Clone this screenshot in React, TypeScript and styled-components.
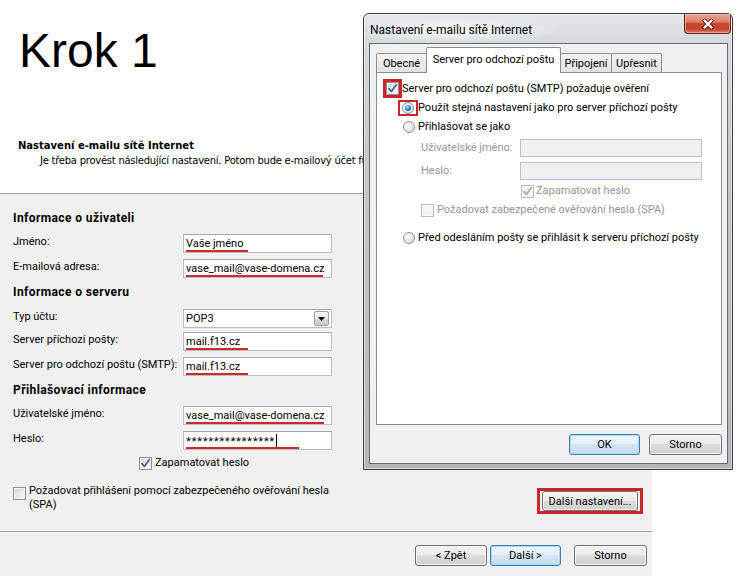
import React from 'react';
import styled, { createGlobalStyle, css } from 'styled-components';

const UI = `Roboto, "Liberation Sans", Arial, sans-serif`;
const TAHOMA = `"DejaVu Sans", Verdana, sans-serif`;
const RED = '#c8262c';

const Global = createGlobalStyle`
  html, body { margin: 0; padding: 0; background: #fff; }
  body { width: 753px; height: 576px; overflow: hidden; font-family: ${UI}; font-size: 11px; color: #000; }
  * { box-sizing: border-box; }
`;

const Page = styled.div`
  position: relative;
  width: 753px;
  height: 576px;
  background: #fff;
  overflow: hidden;
`;

const Wizard = styled.div`
  display: flex;
  flex-direction: column;
  width: 753px;
  height: 576px;
`;

const Header = styled.header`
  height: 193px;
  flex-shrink: 0;
  display: flex;
  flex-direction: column;
  background: #fff;
`;

const StepTitle = styled.h1`
  margin: 27px 0 0 19px;
  font: 400 48px/48px "Liberation Sans", Arial, sans-serif;
  color: #000;
`;

const HeaderTitle = styled.div`
  margin: 64px 0 0 18px;
  font: 700 10px/14px ${TAHOMA};
  color: #000;
`;

const HeaderSub = styled.div`
  margin: 1px 0 0 40px;
  font: 400 10px/14px ${TAHOMA};
  letter-spacing: -0.25px;
  white-space: nowrap;
  color: #000;
`;

const Body = styled.section`
  width: 652px;
  flex: 1;
  background: #f0f0f0;
  border-top: 1px solid #a0a0a0;
  display: flex;
  flex-direction: column;
`;

const Form = styled.div`
  height: 337px;
  flex-shrink: 0;
  padding: 16px 0 0 13px;
  display: flex;
  flex-direction: column;
`;

const SectionTitle = styled.div<{ $mt: number }>`
  margin-top: ${p => p.$mt}px;
  height: 16px;
  line-height: 16px;
  font-weight: 700;
  font-size: 12px;
  letter-spacing: 0.4px;
`;

const FieldRow = styled.div<{ $mt: number }>`
  margin-top: ${p => p.$mt}px;
  display: flex;
  align-items: center;
  height: 19px;
`;

const FieldLabel = styled.label`
  width: 170px;
  flex-shrink: 0;
  line-height: 14px;
  margin-top: -3px;
`;

const TextBox = styled.div`
  position: relative;
  width: 149px;
  height: 19px;
  background: #fff;
  border: 1px solid #b9bcc3;
  border-top-color: #a3a6ad;
  padding: 0 2px;
  display: flex;
  align-items: center;
  font-size: 11px;
  white-space: nowrap;
  overflow: hidden;
`;

const Masked = styled.span`
  letter-spacing: 0.6px;
  font-size: 11.5px;
`;

const RedMark = styled.span<{ $w: number }>`
  position: absolute;
  left: 2px;
  bottom: 0;
  height: 2px;
  width: ${p => p.$w}px;
  background: #cf2a2a;
`;

const Caret = styled.span`
  display: inline-block;
  width: 1px;
  height: 13px;
  background: #000;
  margin-left: 1px;
`;

const DropButton = styled.span`
  margin-left: auto;
  width: 15px;
  height: 15px;
  border: 1px solid #9a9ea5;
  border-radius: 2px;
  background: linear-gradient(#f6f6f6 0%, #e6e6e6 50%, #d6d6d6 51%, #cbcbcb 100%);
  display: flex;
  align-items: center;
  justify-content: center;
`;

const CheckRow = styled.label<{ $mt: number; $ml: number; $gap?: number }>`
  margin-top: ${p => p.$mt}px;
  margin-left: ${p => p.$ml}px;
  display: flex;
  align-items: center;
  gap: ${p => p.$gap ?? 3}px;
  line-height: 14px;
  height: 14px;
  white-space: nowrap;
`;

const OptionsRow = styled.div`
  margin-top: 14px;
  display: flex;
  justify-content: space-between;
  align-items: flex-start;
  padding-right: 9px;
`;

const SpaCheck = styled.label`
  display: flex;
  align-items: flex-start;
  gap: 3px;
  line-height: 14px;
  & > span:first-child {
    margin-top: 3px;
  }
`;

const Annot = styled.span<{ $pad?: string; $bw?: number; $mt?: number }>`
  display: inline-flex;
  align-items: center;
  justify-content: center;
  flex-shrink: 0;
  border: ${p => p.$bw ?? 3}px solid ${RED};
  padding: ${p => p.$pad ?? '0'};
  margin-top: ${p => p.$mt ?? 0}px;
`;

const ButtonBar = styled.div`
  flex: 1;
  border-top: 1px solid #a0a0a0;
  display: flex;
  justify-content: flex-end;
  align-items: flex-start;
  padding: 13px 5px 0 0;
`;

const WinButton = styled.button<{ $w: number; $h?: number; $default?: boolean; $ml?: number }>`
  width: ${p => p.$w}px;
  height: ${p => p.$h ?? 21}px;
  margin-left: ${p => p.$ml ?? 0}px;
  padding: 0;
  font: 400 11px/1 ${UI};
  color: #000;
  border: 1px solid ${p => (p.$default ? '#3c7fb1' : '#707070')};
  border-radius: 3px;
  background: ${p =>
    p.$default
      ? 'linear-gradient(#f1f7fc 0%, #e3eef8 49%, #d3e5f4 50%, #c6ddf1 100%)'
      : 'linear-gradient(#f2f2f2 0%, #ebebeb 49%, #dddddd 50%, #cfcfcf 100%)'};
  box-shadow: inset 0 0 0 1px ${p => (p.$default ? '#a6dbf7' : 'rgba(255,255,255,0.75)')};
`;

/* ---------- checkbox / radio ---------- */

const BoxShell = styled.span<{ $disabled?: boolean }>`
  width: 13px;
  height: 13px;
  flex-shrink: 0;
  border: 1px solid ${p => (p.$disabled ? '#bdbdbd' : '#8e8f8f')};
  background: ${p =>
    p.$disabled
      ? '#f4f4f4'
      : 'linear-gradient(135deg, #cdd1d6 0%, #e9ebee 55%, #fafafa 100%)'};
  box-shadow: inset 0 0 0 1px ${p => (p.$disabled ? '#f8f8f8' : '#f4f4f4')};
  display: inline-flex;
  align-items: center;
  justify-content: center;
`;

const Radio = styled.span<{ $on?: boolean }>`
  width: 12px;
  height: 12px;
  border-radius: 50%;
  flex-shrink: 0;
  border: 1px solid #8e8f8f;
  background: radial-gradient(circle at 35% 35%, #fdfdfd 0%, #e6e6e6 55%, #cdcdcd 100%);
  display: inline-flex;
  align-items: center;
  justify-content: center;
  ${p =>
    p.$on &&
    css`
      &::after {
        content: '';
        width: 6px;
        height: 6px;
        border-radius: 50%;
        background: radial-gradient(circle at 40% 35%, #c4ecff 0%, #2f86d8 45%, #0b3775 100%);
      }
    `}
`;

function Check({ checked, disabled }: { checked?: boolean; disabled?: boolean }) {
  return (
    <BoxShell $disabled={disabled}>
      {checked && (
        <svg width="11" height="11" viewBox="0 0 11 11">
          <path
            d="M2 5.6 L4.4 8.4 L9.2 1.8"
            fill="none"
            stroke={disabled ? '#a6a6a6' : '#4a5e99'}
            strokeWidth="1.7"
            strokeLinecap="round"
            strokeLinejoin="round"
          />
        </svg>
      )}
    </BoxShell>
  );
}

/* ---------- dialog ---------- */

const Dialog = styled.div`
  position: absolute;
  left: 363px;
  top: 13px;
  width: 370px;
  height: 457px;
  border: 1px solid #3e4043;
  border-radius: 6px 6px 0 0;
  background: linear-gradient(180deg, #e4e7eb 0px, #d6dade 28px, #c4c8cd 140px, #b3b6ba 100%);
  box-shadow: inset 0 0 0 1px rgba(255, 255, 255, 0.45);
  display: flex;
  flex-direction: column;
  padding: 0 4px 5px 5px;
`;

const TitleBar = styled.div`
  height: 29px;
  flex-shrink: 0;
  display: flex;
  align-items: flex-start;
  background: radial-gradient(ellipse 110px 13px at 82px 16px, rgba(255, 255, 255, 0.9), rgba(255, 255, 255, 0));
`;

const Caption = styled.div`
  margin: 8px 0 0 1px;
  font: 400 12px/16px ${UI};
  color: #000;
  white-space: nowrap;
`;

const CloseButton = styled.span`
  margin-left: auto;
  margin-right: -3px;
  width: 47px;
  height: 20px;
  border: 1px solid #6b2418;
  border-top: none;
  border-radius: 0 0 4px 4px;
  background: linear-gradient(#e9a897 0%, #dc7e69 42%, #c7472f 50%, #c4442c 78%, #df7f65 100%);
  box-shadow: inset 0 0 0 1px rgba(255, 215, 200, 0.45);
  display: flex;
  align-items: center;
  justify-content: center;
`;

const Client = styled.div`
  flex: 1;
  background: #f0f0f0;
  border: 1px solid #676b71;
  padding: 3px 5px 0 6px;
  display: flex;
  flex-direction: column;
`;

const TabStrip = styled.div`
  height: 25px;
  display: flex;
  align-items: flex-end;
  flex-shrink: 0;
`;

const Tab = styled.div<{ $w: number; $active?: boolean }>`
  width: ${p => p.$w}px;
  height: ${p => (p.$active ? 26 : 19)}px;
  margin-bottom: ${p => (p.$active ? -1 : 0)}px;
  position: relative;
  z-index: ${p => (p.$active ? 1 : 0)};
  border: 1px solid #898c95;
  border-bottom: none;
  border-radius: 2px 2px 0 0;
  background: ${p => (p.$active ? '#fff' : 'linear-gradient(#f3f3f3, #e3e3e3)')};
  display: flex;
  align-items: ${p => (p.$active ? 'flex-start' : 'center')};
  padding-top: ${p => (p.$active ? 5 : 0)}px;
  justify-content: center;
  white-space: nowrap;
  & + & {
    margin-left: -1px;
  }
`;

const TabPanel = styled.div`
  height: 353px;
  flex-shrink: 0;
  background: #fff;
  border: 1px solid #898c95;
  padding: 6px 0 0 6px;
  display: flex;
  flex-direction: column;
`;

const PanelRow = styled.div<{ $mt: number; $ml: number; $h: number; $dim?: boolean }>`
  margin-top: ${p => p.$mt}px;
  margin-left: ${p => p.$ml}px;
  height: ${p => p.$h}px;
  display: flex;
  align-items: center;
  white-space: nowrap;
  line-height: 14px;
  color: ${p => (p.$dim ? '#969696' : '#000')};
`;

const Gap = styled.span<{ $w: number }>`
  display: inline-block;
  width: ${p => p.$w}px;
  flex-shrink: 0;
`;

const DimLabel = styled.span`
  width: 99px;
  flex-shrink: 0;
`;

const DimInput = styled.span`
  width: 182px;
  height: 18px;
  background: #f0f0f0;
  border: 1px solid #adc1da;
`;

const DialogButtons = styled.div`
  margin-top: 9px;
  display: flex;
  justify-content: flex-end;
  gap: 9px;
`;

export default function App() {
  return (
    <Page>
      <Global />
      <Wizard>
        <Header>
          <StepTitle>Krok 1</StepTitle>
          <HeaderTitle>Nastavení e-mailu sítě Internet</HeaderTitle>
          <HeaderSub>Je třeba provést následující nastavení. Potom bude e-mailový účet fungovat.</HeaderSub>
        </Header>
        <Body>
          <Form>
            <SectionTitle $mt={0}>Informace o uživateli</SectionTitle>
            <FieldRow $mt={8}>
              <FieldLabel>Jméno:</FieldLabel>
              <TextBox>
                Vaše jméno
                <RedMark $w={62} />
              </TextBox>
            </FieldRow>
            <FieldRow $mt={6}>
              <FieldLabel>E-mailová adresa:</FieldLabel>
              <TextBox>
                vase_mail@vase-domena.cz
                <RedMark $w={137} />
              </TextBox>
            </FieldRow>
            <SectionTitle $mt={6}>Informace o serveru</SectionTitle>
            <FieldRow $mt={9}>
              <FieldLabel>Typ účtu:</FieldLabel>
              <TextBox>
                POP3
                <DropButton>
                  <svg width="7" height="4" viewBox="0 0 7 4">
                    <path d="M0 0 H7 L3.5 4 Z" fill="#000" />
                  </svg>
                </DropButton>
              </TextBox>
            </FieldRow>
            <FieldRow $mt={4}>
              <FieldLabel>Server příchozí pošty:</FieldLabel>
              <TextBox>
                mail.f13.cz
                <RedMark $w={62} />
              </TextBox>
            </FieldRow>
            <FieldRow $mt={6}>
              <FieldLabel>Server pro odchozí poštu (SMTP):</FieldLabel>
              <TextBox>
                mail.f13.cz
                <RedMark $w={62} />
              </TextBox>
            </FieldRow>
            <SectionTitle $mt={6}>Přihlašovací informace</SectionTitle>
            <FieldRow $mt={8}>
              <FieldLabel>Uživatelské jméno:</FieldLabel>
              <TextBox>
                vase_mail@vase-domena.cz
                <RedMark $w={138} />
              </TextBox>
            </FieldRow>
            <FieldRow $mt={6}>
              <FieldLabel>Heslo:</FieldLabel>
              <TextBox>
                <Masked>****************</Masked>
                <Caret />
                <RedMark $w={113} />
              </TextBox>
            </FieldRow>
            <CheckRow $mt={6} $ml={126}>
              <Check checked />
              Zapamatovat heslo
            </CheckRow>
            <OptionsRow>
              <SpaCheck>
                <Check />
                <span>
                  Požadovat přihlášení pomocí zabezpečeného ověřování hesla
                  <br />
                  (SPA)
                </span>
              </SpaCheck>
              <Annot $pad="0 2px" $mt={4}>
                <WinButton $w={96} $h={20}>Další nastavení...</WinButton>
              </Annot>
            </OptionsRow>
          </Form>
          <ButtonBar>
            <WinButton $w={72}>&lt; Zpět</WinButton>
            <WinButton $w={71} $ml={3} $default>
              Další &gt;
            </WinButton>
            <WinButton $w={73} $ml={13}>
              Storno
            </WinButton>
          </ButtonBar>
        </Body>
      </Wizard>

      <Dialog>
        <TitleBar>
          <Caption>Nastavení e-mailu sítě Internet</Caption>
          <CloseButton>
            <svg width="14" height="12" viewBox="0 0 14 12">
              <path d="M3.5 2.5 L10.5 9.5 M10.5 2.5 L3.5 9.5" stroke="#5a1b10" strokeWidth="4" strokeLinecap="round" />
              <path d="M3.5 2.5 L10.5 9.5 M10.5 2.5 L3.5 9.5" stroke="#fff" strokeWidth="2.4" strokeLinecap="round" />
            </svg>
          </CloseButton>
        </TitleBar>
        <Client>
          <TabStrip>
            <Tab $w={51}>Obecné</Tab>
            <Tab $w={135} $active>
              Server pro odchozí poštu
            </Tab>
            <Tab $w={52}>Připojení</Tab>
            <Tab $w={51}>Upřesnit</Tab>
          </TabStrip>
          <TabPanel>
            <PanelRow $mt={0} $ml={0} $h={19}>
              <Annot>
                <Check checked />
              </Annot>
              Server pro odchozí poštu (SMTP) požaduje ověření
            </PanelRow>
            <PanelRow $mt={2} $ml={15} $h={16}>
              <Annot $bw={2} $pad="0 2px">
                <Radio $on />
              </Annot>
              Použít stejná nastavení jako pro server příchozí pošty
            </PanelRow>
            <PanelRow $mt={4} $ml={20} $h={14}>
              <Radio />
              <Gap $w={3} />
              Přihlašovat se jako
            </PanelRow>
            <PanelRow $mt={5} $ml={38} $h={18} $dim>
              <DimLabel>Uživatelské jméno:</DimLabel>
              <DimInput />
            </PanelRow>
            <PanelRow $mt={5} $ml={38} $h={18} $dim>
              <DimLabel>Heslo:</DimLabel>
              <DimInput />
            </PanelRow>
            <PanelRow $mt={4} $ml={138} $h={14} $dim>
              <Check checked disabled />
              <Gap $w={2} />
              Zapamatovat heslo
            </PanelRow>
            <PanelRow $mt={5} $ml={38} $h={14} $dim>
              <Check disabled />
              <Gap $w={3} />
              Požadovat zabezpečené ověřování hesla (SPA)
            </PanelRow>
            <PanelRow $mt={14} $ml={20} $h={14}>
              <Radio />
              <Gap $w={3} />
              Před odesláním pošty se přihlásit k serveru příchozí pošty
            </PanelRow>
          </TabPanel>
          <DialogButtons>
            <WinButton $w={71} $default>
              OK
            </WinButton>
            <WinButton $w={73}>Storno</WinButton>
          </DialogButtons>
        </Client>
      </Dialog>
    </Page>
  );
}
